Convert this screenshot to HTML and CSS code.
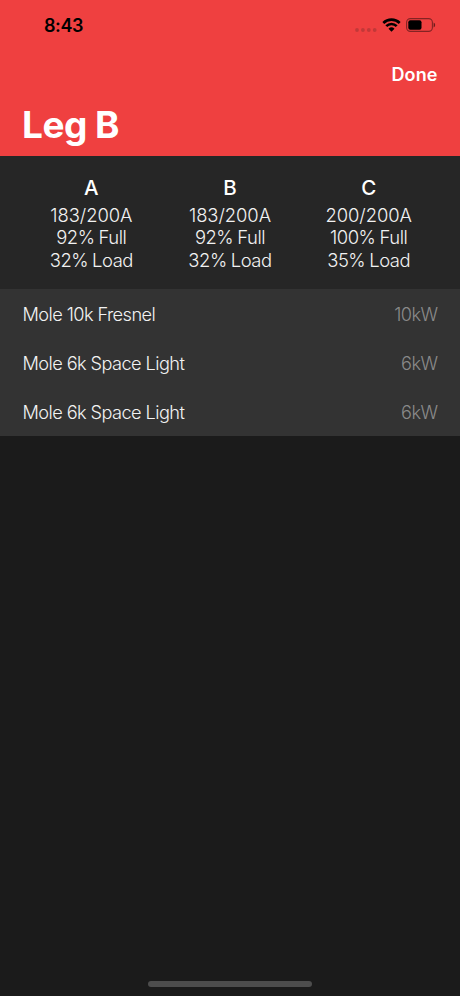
FILE: index.html
```html
<!DOCTYPE html>
<html lang="en">
<head>
<meta charset="utf-8">
<title>Leg B</title>
<link rel="stylesheet" href="styles.css">
</head>
<body>
<header class="header">
  <div class="status">
    <span class="time">8:43</span>
    <span class="indicators">
      <svg class="dots" width="22" height="4" viewBox="0 0 22 4"><circle cx="2" cy="2" r="1.9"/><circle cx="7.900" cy="2" r="1.9"/><circle cx="13.800" cy="2" r="1.9"/><circle cx="19.700" cy="2" r="1.9"/></svg>
      <svg class="wifi" width="19" height="14" viewBox="0 0 19 14"><path d="M1.300 5a11.700 11.700 0 0 1 16.400 0M4.300 8.100a7.400 7.400 0 0 1 10.400 0" fill="none" stroke="#000" stroke-width="2.6"/><path d="M9.500 13.700 6.500 10.700a4.300 4.300 0 0 1 6 0z"/></svg>
      <svg class="battery" width="30" height="14" viewBox="0 0 30 14"><rect x=".6" y=".6" width="25.800" height="12.800" rx="3.800" fill="none" stroke="#000" stroke-opacity=".45" stroke-width="1.100"/><rect x="2.300" y="2.300" width="13.200" height="9.400" rx="2"/><path d="M27.600 4.600a2.600 2.600 0 0 1 0 4.800z" fill-opacity=".55"/></svg>
    </span>
  </div>
  <nav class="nav"><a class="done">Done</a></nav>
  <h1 class="title">Leg B</h1>
</header>
<section class="legs">
  <div class="leg"><h2>A</h2><p class="amps">183/200A</p><p>92% Full</p><p>32% Load</p></div>
  <div class="leg"><h2>B</h2><p class="amps">183/200A</p><p>92% Full</p><p>32% Load</p></div>
  <div class="leg"><h2>C</h2><p class="amps">200/200A</p><p>100% Full</p><p>35% Load</p></div>
</section>
<ul class="list">
  <li><span>Mole 10k Fresnel</span><span class="power">10kW</span></li>
  <li><span>Mole 6k Space Light</span><span class="power">6kW</span></li>
  <li><span>Mole 6k Space Light</span><span class="power">6kW</span></li>
</ul>
<footer class="home"><div class="bar"></div></footer>
</body>
</html>
```
FILE: styles.css
```css
* { box-sizing: border-box; margin: 0; padding: 0; }
body { height: 996px; display: flex; flex-direction: column; background: #1b1b1b; color: #fff; font-family: Inter, sans-serif; overflow: hidden; }
.header { height: 156px; background: #ef4040; flex: none; }
.status { height: 50px; padding: 1px 24px 0 44px; display: flex; justify-content: space-between; align-items: center; color: #000; }
.time { font-size: 18px; font-weight: 600; letter-spacing: -0.4px; }
.indicators { display: flex; align-items: center; gap: 5px; }
.dots { fill: #c23838; margin-top: 9px; }
.wifi, .battery { margin-bottom: 1px; }
.nav { height: 48px; padding: 0 22.500px; display: flex; justify-content: flex-end; align-items: center; }
.done { font-size: 18px; font-weight: 600; letter-spacing: 0.1px; }
.title { padding-left: 22px; font-size: 37px; line-height: 54px; font-weight: 700; letter-spacing: -0.5px; }
.legs { height: 133px; padding: 20px 22px 0; display: grid; grid-template-columns: repeat(3, 1fr); background: #262626; flex: none; }
.leg { text-align: center; }
.leg h2 { font-size: 20.500px; line-height: 24px; font-weight: 500; margin-bottom: 4px; }
.leg p { font-size: 18.400px; line-height: 22.300px; font-weight: 300; letter-spacing: -0.45px; word-spacing: -0.6px; color: #f2f2f2; }
.leg .amps { letter-spacing: -0.05px; }
.list { list-style: none; background: #333; flex: none; height: 147px; }
.list li { height: 49px; padding: 0 22.500px; display: flex; justify-content: space-between; align-items: center; font-size: 18.200px; font-weight: 300; letter-spacing: -0.58px; color: #f2f2f2; }
.list .power { color: #8a8a8a; }
.home { margin-top: auto; display: flex; justify-content: center; padding-bottom: 9px; }
.bar { width: 164px; height: 6px; border-radius: 3px; background: #4d4d4d; }
```
